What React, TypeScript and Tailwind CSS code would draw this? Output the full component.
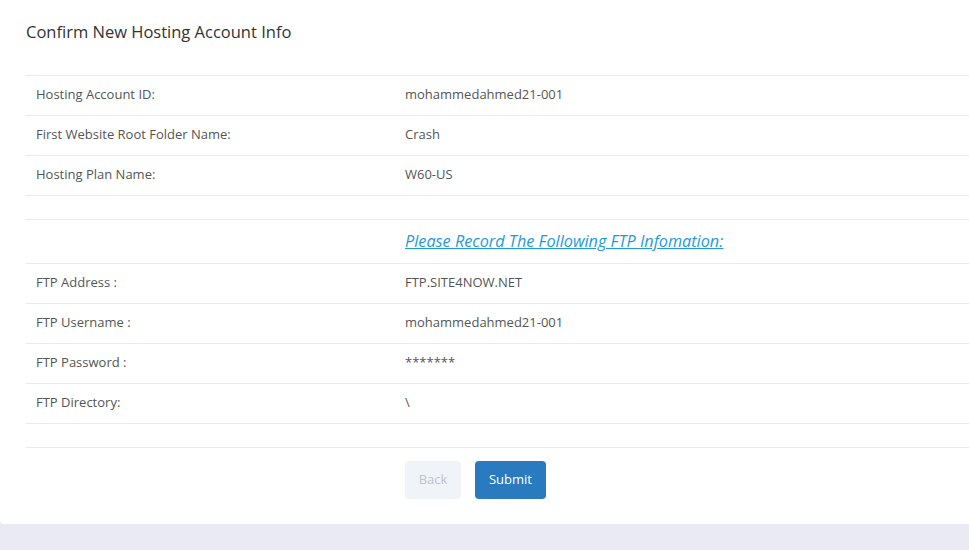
import React from "react";

type Row = { label: string; value: string };

const accountRows: Row[] = [
  { label: "Hosting Account ID:", value: "mohammedahmed21-001" },
  { label: "First Website Root Folder Name:", value: "Crash" },
  { label: "Hosting Plan Name:", value: "W60-US" },
];

const ftpRows: Row[] = [
  { label: "FTP Address :", value: "FTP.SITE4NOW.NET" },
  { label: "FTP Username :", value: "mohammedahmed21-001" },
  { label: "FTP Password :", value: "*******" },
  { label: "FTP Directory:", value: "\\" },
];

function InfoRow({ label, value }: Row) {
  return (
    <div className="grid grid-cols-[369px_1fr] h-10 items-center border-b border-[#ebebeb] pb-[1px]">
      <div className="px-[10px]">{label}</div>
      <div className="px-[10px]">{value}</div>
    </div>
  );
}

export default function App() {
  return (
    <div
      className="min-h-[550px] bg-[#e9eaf3] text-[13px] text-[#555]"
      style={{ fontFamily: '"Open Sans", "Liberation Sans", sans-serif' }}
    >
      <div className="bg-white rounded-bl-[4px] pl-[26px] pb-[25px]">
        {/* Header */}
        <div className="h-[75px] pt-[19px]">
          <h2 className="text-[16.5px] text-[#333] leading-[26px]">
            Confirm New Hosting Account Info
          </h2>
        </div>

        {/* Account details */}
        <div className="border-t border-[#ebebeb]">
          {accountRows.map((r) => (
            <InfoRow key={r.label} {...r} />
          ))}
          <div className="h-6 border-b border-[#ebebeb]" />
          <div className="grid grid-cols-[369px_1fr] h-[44px] items-center border-b border-[#ebebeb]">
            <div />
            <div className="px-[10px]">
              <a
                href="#"
                className="text-[16.25px] italic underline text-[#1f9ad6]"
              >
                Please Record The Following FTP Infomation:
              </a>
            </div>
          </div>
          {ftpRows.map((r) => (
            <InfoRow key={r.label} {...r} />
          ))}
          <div className="h-6 border-b border-[#ebebeb]" />
        </div>

        {/* Actions */}
        <div className="grid grid-cols-[369px_1fr] mt-[13px]">
          <div />
          <div className="px-[10px] flex gap-[14px]">
            <button className="h-[38px] w-[56px] rounded-[4px] bg-[#f0f3f7] text-[#c2c2cc]">
              Back
            </button>
            <button className="h-[38px] w-[71px] rounded-[4px] bg-[#2a7abf] text-white">
              Submit
            </button>
          </div>
        </div>
      </div>
    </div>
  );
}
